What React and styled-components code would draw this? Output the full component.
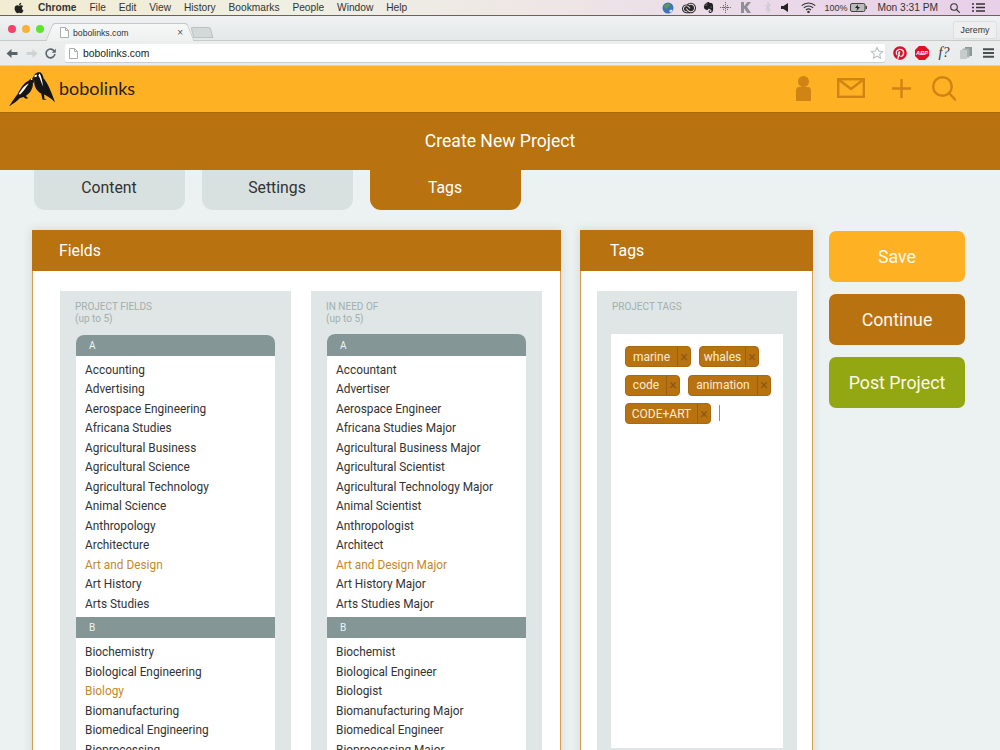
import React from 'react';
import styled, { createGlobalStyle } from 'styled-components';
import { FaApple, FaPinterest } from 'react-icons/fa';
import { SiEvernote, SiAdobecreativecloud } from 'react-icons/si';

const Global = createGlobalStyle`
  html, body { margin: 0; padding: 0; background: #ecf1f1; }
  * { box-sizing: border-box; }
  #root { height: 750px; overflow: hidden; }
`;
const Page = styled.div`
  width: 1000px; height: 750px; overflow: hidden; background: #ecf1f1;
  font-family: Roboto, sans-serif; color: #333;
`;
const MenuBar = styled.div`
  height: 16px; display: flex; align-items: center; padding-left: 13px;
  background: linear-gradient(90deg, #f1ecd2 0%, #efefe3 30%, #eee6e6 55%, #ead8e8 78%, #e8d0e8 100%);
  border-bottom: 1px solid #6b6258;
  font: 10.2px "Liberation Sans", Arial, sans-serif; color: #333;
`;
const AppleMark = styled.span`display: flex; width: 12px; margin-right: 13px; font-size: 12px; color: #222;`;
const MenuItem = styled.span`
  margin-right: 12.9px; font-weight: ${p => (p.$bold ? 700 : 400)}; white-space: nowrap;
`;
const StatusArea = styled.div`margin-left: auto; display: flex; align-items: center; padding-right: 15px;`;
const StatusItem = styled.span`
  display: flex; align-items: center; margin-left: ${p => p.$gap}px; white-space: nowrap; color: ${p => p.$c || '#333'};
  font-size: ${p => p.$fs || 10.2}px;
`;
const TabStrip = styled.div`
  height: 25px; display: flex; align-items: flex-end; position: relative; padding-left: 8px;
  background: linear-gradient(#f0f2f2, #e4e8e8); border-bottom: 1px solid #c7cbca;
`;
const Lights = styled.div`display: flex; gap: 6px; align-self: flex-start; margin-top: 9px; margin-right: 10px;`;
const Light = styled.span`width: 8px; height: 8px; border-radius: 50%; background: ${p => p.$c};`;
const BrowserTab = styled.div`
  position: relative; width: 132px; height: 18px; margin-bottom: -1px; display: flex; align-items: center;
  background: linear-gradient(#f6f7f7, #eff1f1); border-top: 1px solid #c4c8c8;
  font: 8.7px "Liberation Sans", Arial, sans-serif; color: #333; padding-left: 6px;
  &::before, &::after {
    content: ''; position: absolute; top: -1px; bottom: 0; width: 9px;
    background: linear-gradient(#f6f7f7, #eff1f1); border-top: 1px solid #c4c8c8;
  }
  &::before { left: -5px; transform: skewX(-22deg); border-left: 1px solid #c4c8c8; border-top-left-radius: 3px; }
  &::after { right: -5px; transform: skewX(22deg); border-right: 1px solid #c4c8c8; border-top-right-radius: 3px; }
`;
const TabGlyph = styled.span`position: relative; z-index: 1; display: flex;`;
const TabLabel = styled.span`position: relative; z-index: 1; margin-left: 4px; flex: 1;`;
const TabClose = styled.span`position: relative; z-index: 1; font-size: 10px; color: #555; margin-right: 3px;`;
const NewTab = styled.div`
  width: 20px; height: 11px; margin: 0 0 2px 6px; background: #d3d8d8; border: 1px solid #bcc2c2;
  border-radius: 2px 2px 0 0; transform: skewX(15deg);
`;
const Profile = styled.div`
  margin-left: auto; margin-right: 3px; align-self: flex-start; margin-top: 5px; width: 44px; height: 18px;
  display: flex; align-items: center; justify-content: center; font: 8.8px "Liberation Sans", Arial, sans-serif;
  background: #eef0f0; border: 1px solid #dde0e0; border-radius: 2px; color: #333;
`;
const Toolbar = styled.div`
  height: 25px; display: flex; align-items: center; padding-left: 6px;
  background: linear-gradient(#eceeee, #e9ecec); border-bottom: 1px solid #d3d6d0;
`;
const NavIcon = styled.span`display: flex; width: ${p => p.$w}px; margin-right: ${p => p.$m}px;`;
const Omnibox = styled.div`
  width: 820px; height: 18px; margin-left: 9px; display: flex; align-items: center; padding: 0 0 0 4px;
  background: #fff; border-radius: 2px; box-shadow: 0 1px 0 #c9cdcd;
  font: 10.4px "Liberation Sans", Arial, sans-serif; color: #222;
`;
const OmniText = styled.span`margin-left: 5px; flex: 1;`;
const OmniEnd = styled.span`width: 1px;`;
const Extensions = styled.div`display: flex; align-items: center; margin-left: 4px;`;
const ExtSlot = styled.span`
  width: 22px; display: flex; justify-content: center; align-items: center;
  font: italic 14px "Liberation Serif", serif; color: ${p => p.$c || '#333'};
`;
const SiteHeader = styled.header`
  height: 46px; background: #ffb124; display: flex; align-items: center; padding: 0 44px 0 9px;
`;
const Logo = styled.svg`width: 48px; height: 34.5px; margin-right: 2px; flex: none;`;
const Wordmark = styled.span`
  font: 400 18px Lato, sans-serif; color: #231f17; margin-bottom: 2px;
`;
const HeaderIcons = styled.nav`margin-left: auto; display: flex; align-items: center; padding-bottom: 2px;`;
const HeaderIcon = styled.svg`display: block; margin-left: ${p => p.$gap}px;`;
const TitleBand = styled.div`
  height: 58px; background: #b87210; color: #fff; display: flex; align-items: center; justify-content: center;
  font-size: 17.6px; border-top: 1px solid #a9690f; padding-bottom: 2px;
`;
const Tabs = styled.div`display: flex; gap: 17px; padding-left: 34px; height: 40px;`;
const Tab = styled.div`
  width: 151px; height: 40px; border-radius: 0 0 11px 11px; display: flex; align-items: center; justify-content: center;
  padding: 0 1px 5px 0; font-size: 15.8px;
  background: ${p => (p.$active ? '#b87210' : '#d9e1e0')}; color: ${p => (p.$active ? '#fff' : '#333')};
`;
const Main = styled.main`display: flex; align-items: flex-start; padding: 20px 0 0 32px;`;
const Panel = styled.section`
  width: ${p => p.$w}px; margin-right: ${p => p.$m}px; flex: none; background: #fff;
  border: 1px solid #d99f4e; box-shadow: 0 0 9px rgba(90, 110, 110, .2);
`;
const PanelHead = styled.h2`
  height: 41px; margin: -1px -1px 0; background: #b87210; color: #fff; font-size: 15.8px; font-weight: 400;
  display: flex; align-items: center; padding-left: ${p => p.$pad}px;
`;
const PanelBody = styled.div`display: flex; gap: 20px; padding: 20px ${p => p.$r}px 0 ${p => p.$l}px;`;
const Card = styled.div`
  width: ${p => p.$w}px; background: #dfe6e5; padding: 10px 16px 60px; flex: none;
`;
const CardLabel = styled.div`
  font-size: 10px; line-height: 11.5px; height: 23px; margin-left: -1px; color: #a2afae;
`;
const List = styled.div`
  background: #fff; margin-top: ${p => (p.$raised ? 10 : 11)}px; border-radius: 8px 8px 0 0; width: 199px;
`;
const LetterHead = styled.div`
  height: ${p => (p.$raised ? 22 : 21)}px; background: #849695; color: #f0f4f4; font-size: 10px; display: flex; align-items: center;
  padding-left: 13px; border-radius: ${p => (p.$first ? '8px 8px 0 0' : '0')};
`;
const Rows = styled.div`padding: ${p => p.$top}px 0 3px 9px;`;
const Row = styled.div`
  height: 19.5px; line-height: 19.5px; font-size: 11.85px; white-space: nowrap; color: ${p => (p.$on ? '#c8872a' : '#333')};
`;
const TagBox = styled.div`
  width: 172px; height: 414px; margin: 10px 0 0 -2px; background: #fff; padding: 12px 12px 0 14px;
  display: flex; flex-wrap: wrap; align-content: flex-start; column-gap: 8px; row-gap: 7.5px;
`;
const Tag = styled.div`
  height: 21px; display: flex; background: #b87210; border: 1px solid #a9690f; border-radius: 4px; color: #f8ecd6; font-size: 12px;
`;
const TagText = styled.span`width: ${p => p.$w}px; display: flex; align-items: center; justify-content: center;`;
const TagClose = styled.span`
  width: 13px; border-left: 1px solid #99600e; display: flex; align-items: center; justify-content: center;
  color: #8a5a12; font-size: 14px;
`;
const Caret = styled.span`width: 1px; height: 16px; margin-top: 2px; background: #a98b55;`;
const Actions = styled.div`width: 136px; display: flex; flex-direction: column; gap: 12.5px; margin-top: 1px;`;
const ActionButton = styled.button`
  height: 50.5px; border: 0; border-radius: 7px; background: ${p => p.$bg}; color: #fbf7ec;
  font: 400 17.8px Roboto, sans-serif; padding: 0;
`;

const fieldsA = ['Accounting','Advertising','Aerospace Engineering','Africana Studies','Agricultural Business','Agricultural Science','Agricultural Technology','Animal Science','Anthropology','Architecture','Art and Design','Art History','Arts Studies'];
const fieldsB = ['Biochemistry','Biological Engineering','Biology','Biomanufacturing','Biomedical Engineering','Bioprocessing'];
const needA = ['Accountant','Advertiser','Aerospace Engineer','Africana Studies Major','Agricultural Business Major','Agricultural Scientist','Agricultural Technology Major','Animal Scientist','Anthropologist','Architect','Art and Design Major','Art History Major','Arts Studies Major'];
const needB = ['Biochemist','Biological Engineer','Biologist','Biomanufacturing Major','Biomedical Engineer','Bioprocessing Major'];
const isOn = t => t.startsWith('Art and Design') || t === 'Biology';
const tags = [['marine', 51], ['whales', 45], ['code', 40], ['animation', 68], ['CODE+ART', 71]];

const Column = ({ title, a, b, raised }) => (
  <Card $w={231}>
    <CardLabel>{title}<br />(up to 5)</CardLabel>
    <List $raised={raised}>
      <LetterHead $first $raised={raised}>A</LetterHead>
      <Rows $top={4.5}>{a.map(t => <Row key={t} $on={isOn(t)}>{t}</Row>)}</Rows>
      <LetterHead>B</LetterHead>
      <Rows $top={5}>{b.map(t => <Row key={t} $on={isOn(t)}>{t}</Row>)}</Rows>
    </List>
  </Card>
);

const PageGlyph = () => (
  <svg width="9" height="11" viewBox="0 0 9 11"><path d="M.5.5h5l3 3v7h-8z M5.5.5v3h3" fill="#fff" stroke="#a9aeae" strokeWidth="1" /></svg>
);
const Arrow = ({ flip, c }) => (
  <svg width="12" height="11" viewBox="0 0 12 11" style={flip ? { transform: 'scaleX(-1)' } : undefined}>
    <path d="M11.5 4H5.5V1L.5 5.5l5 4.5V7h6z" fill={c} />
  </svg>
);

export default function App() {
  return (
    <Page>
      <Global />
      <MenuBar>
        <AppleMark><FaApple /></AppleMark>
        <MenuItem $bold>Chrome</MenuItem>
        {['File','Edit','View','History','Bookmarks','People','Window','Help'].map(m => <MenuItem key={m}>{m}</MenuItem>)}
        <StatusArea>
          <StatusItem>
            <svg width="12" height="12" viewBox="0 0 12 12"><circle cx="6" cy="6" r="5.5" fill="#3c76b8" /><path d="M2 3.5c2-2 5-2.5 6-1 .5 1.5-1.5 2-2.5 3.5-.8 1.2-2 .8-2.5 0z" fill="#5e9a52" /><path d="M7 9c1-1.2 2.5-1.5 3.5-1l-1.5 2.7z" fill="#e7e7e7" /></svg>
          </StatusItem>
          <StatusItem $gap={8} $c="#2a2a2a"><SiAdobecreativecloud size={14} /></StatusItem>
          <StatusItem $gap={7} $c="#222"><SiEvernote size={11} /></StatusItem>
          <StatusItem $gap={6}>
            <svg width="11" height="11" viewBox="0 0 11 11" stroke="#6c6c6c" strokeWidth="1" strokeDasharray="1.2 .8"><path d="M5.5 0v11M0 5.5h11M3.5 3v5M7.5 3v5" /></svg>
          </StatusItem>
          <StatusItem $gap={10}>
            <svg width="10" height="11" viewBox="0 0 10 11"><path d="M0 0h3v4.3L6.4 0H10L6 5l4 6H6.4L3 6.3V11H0z" fill="#8d9096" /></svg>
          </StatusItem>
          <StatusItem $gap={14}>
            <svg width="6" height="11" viewBox="0 0 6 11" fill="none" stroke="#c5c5c8" strokeWidth="1"><path d="M.3 3l5 5L3 10.5V.5L5.3 3l-5 5" /></svg>
          </StatusItem>
          <StatusItem $gap={10}>
            <svg width="8" height="9" viewBox="0 0 8 9"><path d="M0 3h2.5L7 0v9L2.5 6H0z" fill="#222" /></svg>
          </StatusItem>
          <StatusItem $gap={12}>
            <svg width="15" height="11" viewBox="0 0 15 11" fill="none" stroke="#333" strokeWidth="1.1"><path d="M.7 3.6a10 10 0 0 1 13.6 0M2.8 5.8a7 7 0 0 1 9.4 0M5 8a3.7 3.7 0 0 1 5 0" /><circle cx="7.5" cy="10" r=".7" fill="#333" /></svg>
          </StatusItem>
          <StatusItem $gap={8} $fs={9}>100%</StatusItem>
          <StatusItem $gap={3}>
            <svg width="17" height="9" viewBox="0 0 17 9"><rect x=".5" y=".5" width="14.5" height="8" rx="1.5" fill="#bbb" stroke="#444" /><rect x="15.5" y="3" width="1.5" height="3" fill="#444" /><path d="M8 1.5L5 5h2.2L6.5 8 10 4H7.8z" fill="#222" /></svg>
          </StatusItem>
          <StatusItem $gap={10}>Mon 3:31 PM</StatusItem>
          <StatusItem $gap={12}>
            <svg width="10" height="10" viewBox="0 0 10 10" fill="none" stroke="#333" strokeWidth="1.1"><circle cx="4" cy="4" r="3.3" /><path d="M6.5 6.5L9.7 9.7" /></svg>
          </StatusItem>
          <StatusItem $gap={12}>
            <svg width="13" height="9" viewBox="0 0 13 9" fill="none" stroke="#333" strokeWidth="1.4"><path d="M0 1h2M4 1h9M0 4.5h2M4 4.5h9M0 8h2M4 8h9" /></svg>
          </StatusItem>
        </StatusArea>
      </MenuBar>

      <TabStrip>
        <Lights>
          <Light $c="#f5416b" /><Light $c="#fbb03b" /><Light $c="#5be52c" />
        </Lights>
        <BrowserTab>
          <TabGlyph><PageGlyph /></TabGlyph>
          <TabLabel>bobolinks.com</TabLabel>
          <TabClose>×</TabClose>
        </BrowserTab>
        <NewTab />
        <Profile>Jeremy</Profile>
      </TabStrip>

      <Toolbar>
        <NavIcon $w={12} $m={8}><Arrow c="#59636a" /></NavIcon>
        <NavIcon $w={12} $m={7}><Arrow flip c="#cfd3d3" /></NavIcon>
        <NavIcon $w={11} $m={0}>
          <svg width="11" height="11" viewBox="0 0 11 11" fill="none"><path d="M9.3 3.2A4.4 4.4 0 1 0 9.9 6" stroke="#59636a" strokeWidth="1.6" /><path d="M10.8.8v4H6.8z" fill="#59636a" /></svg>
        </NavIcon>
        <Omnibox>
          <PageGlyph />
          <OmniText>bobolinks.com</OmniText>
          <svg width="14" height="14" viewBox="0 0 24 24" fill="#fff" stroke="#b6bcbc" strokeWidth="1.8"><path d="M12 2.5l2.9 6.2 6.8.8-5 4.6 1.3 6.7-6-3.4-6 3.4 1.3-6.7-5-4.6 6.8-.8z" /></svg>
          <OmniEnd />
        </Omnibox>
        <Extensions>
          <ExtSlot $c="#d7102c"><FaPinterest size={14} /></ExtSlot>
          <ExtSlot>
            <svg width="14" height="14" viewBox="0 0 14 14"><path d="M4 0h6l4 4v6l-4 4H4l-4-4V4z" fill="#df0f24" /><text x="7" y="9.3" textAnchor="middle" fontFamily="Liberation Sans" fontWeight="700" fontSize="5.6" fill="#fff">ABP</text></svg>
          </ExtSlot>
          <ExtSlot>f?</ExtSlot>
          <ExtSlot>
            <svg width="12" height="12" viewBox="0 0 12 12"><rect x="5" y="0" width="7" height="9" fill="#8e9898" /><rect x="2.5" y="1.5" width="7" height="9" fill="#aab2b2" /><rect x="0" y="3" width="7" height="9" fill="#c6cccc" /></svg>
          </ExtSlot>
          <ExtSlot>
            <svg width="11" height="10" viewBox="0 0 11 10" fill="none" stroke="#48504f" strokeWidth="1.9"><path d="M0 1.2h11M0 5h11M0 8.8h11" /></svg>
          </ExtSlot>
        </Extensions>
      </Toolbar>

      <SiteHeader>
        <Logo viewBox="0 0 50 36">
          <path d="M0 36C3 31 6 27 9 23 12 17 16 11 20 9.500L22.500 7C24 6 26 6.500 27 8L25.500 9.300 27 10.500 24.800 11.500C25.500 16 22.500 22 17.500 25L20 27.500 17.500 28 15 26 11 27.500C8 31 3 34 0 36Z" fill="#151515" />
          <path d="M10 23C13 18 17 13 20.500 12 18 16 15 20 11.500 23.500Z" fill="#fff" />
          <circle cx="23.500" cy="7.500" r=".9" fill="#fff" />
          <path d="M26 4C27 1 30-.5 33 .5 34.500 1.500 35.500 4 36 6.500 40 11 44 20 48 31.500 43 27 40 25 36.500 23.500L37 28 39.500 29 35 29 33.500 22.500C29 20 25.500 14 26.500 9.500L24.500 6.500Z" fill="#151515" />
          <path d="M32 1.500C33.800 5 35 10 35.300 15 33.800 11 32.300 6 30.500 3.300Z" fill="#fff" />
          <path d="M26.500 3.500L29 2.700 29 5 26.500 5.500Z" fill="#fff" />
        </Logo>
        <Wordmark>bobolinks</Wordmark>
        <HeaderIcons>
          <HeaderIcon width="15" height="25" viewBox="0 0 15 25"><circle cx="7.500" cy="5.500" r="5.500" fill="#cf8413" /><path d="M2.500 11h10c1.500 0 2.500 2 2.500 4v10H0V15c0-2 1-4 2.500-4z" fill="#cf8413" /></HeaderIcon>
          <HeaderIcon $gap={26} width="28" height="20" viewBox="0 0 28 20" fill="none" stroke="#cf8413" strokeWidth="2.400"><rect x="1.200" y="1.200" width="25.600" height="17.600" /><path d="M1.500 1.500L14 11 26.500 1.500" /></HeaderIcon>
          <HeaderIcon $gap={27} width="19" height="19" viewBox="0 0 19 19" fill="none" stroke="#cf8413" strokeWidth="2.400"><path d="M9.500 0v19M0 9.500h19" /></HeaderIcon>
          <HeaderIcon $gap={21} width="24" height="25" viewBox="0 0 24 25" fill="none" stroke="#cf8413" strokeWidth="2.400"><circle cx="10.500" cy="10.500" r="9.300" /><path d="M17 17l7 7.500" /></HeaderIcon>
        </HeaderIcons>
      </SiteHeader>

      <TitleBand>Create New Project</TitleBand>

      <Tabs>
        <Tab>Content</Tab>
        <Tab>Settings</Tab>
        <Tab $active>Tags</Tab>
      </Tabs>

      <Main>
        <Panel $w={529} $m={19}>
          <PanelHead $pad={27}>Fields</PanelHead>
          <PanelBody $l={27} $r={18}>
            <Column title="PROJECT FIELDS" a={fieldsA} b={fieldsB} />
            <Column title="IN NEED OF" a={needA} b={needB} raised />
          </PanelBody>
        </Panel>
        <Panel $w={233} $m={16}>
          <PanelHead $pad={30}>Tags</PanelHead>
          <PanelBody $l={16} $r={16}>
            <Card $w={200}>
              <CardLabel>PROJECT TAGS</CardLabel>
              <TagBox>
                {tags.map(([t, w]) => (
                  <Tag key={t}><TagText $w={w}>{t}</TagText><TagClose>×</TagClose></Tag>
                ))}
                <Caret />
              </TagBox>
            </Card>
          </PanelBody>
        </Panel>
        <Actions>
          <ActionButton $bg="#ffb124">Save</ActionButton>
          <ActionButton $bg="#b87210">Continue</ActionButton>
          <ActionButton $bg="#93a713">Post Project</ActionButton>
        </Actions>
      </Main>
    </Page>
  );
}
